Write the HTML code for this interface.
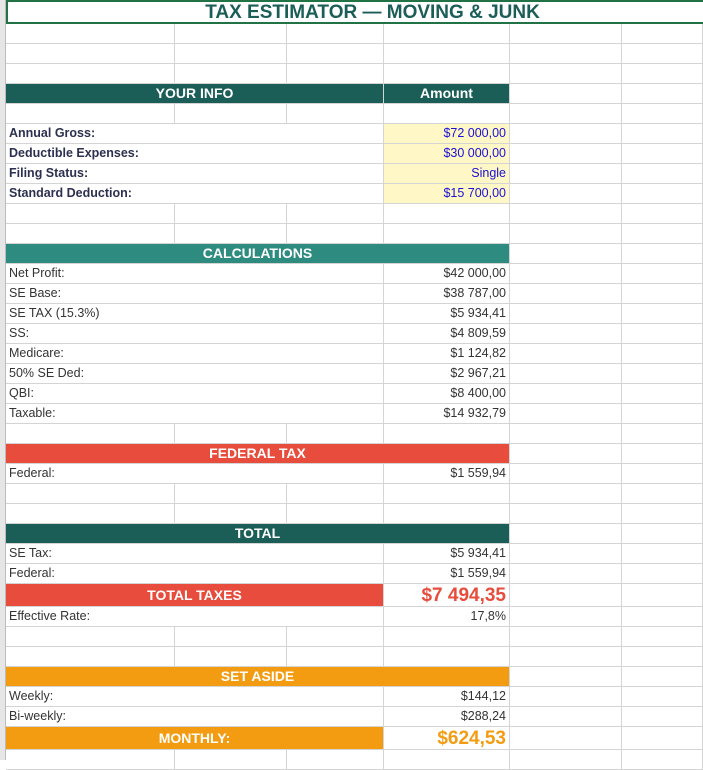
<!DOCTYPE html>
<html><head><style>
body{margin:0;width:703px;height:760px;overflow:hidden;background:#fff;font-family:"Liberation Sans",Arial,sans-serif;position:relative}
.c{position:absolute;box-sizing:border-box;border-right:1px solid #d4d4d4;border-bottom:1px solid #d4d4d4;font-size:12.5px;line-height:19px;color:#333;white-space:nowrap;overflow:hidden}
.l{padding-left:3px}
.r{text-align:right;padding-right:3px}
.b{font-weight:bold;color:#2c3050}
.h{color:#fff;font-weight:bold;text-align:center;font-size:14px}
.y{background:#fff8c6;color:#1a10d8}
#strip{position:absolute;left:0;top:0;width:6px;height:760px;background:#e6e6e6;border-right:1px solid #bbb;box-sizing:border-box;z-index:2}
</style></head><body>
<div id="strip"></div>
<div style="position:absolute;left:6px;top:0;width:697px;height:24px;border:2px solid #217346;border-right:none;box-sizing:border-box;text-align:center;font-weight:bold;font-size:19px;line-height:21px;color:#1b5e57;padding-left:34px">TAX ESTIMATOR — MOVING &amp; JUNK</div>
<div id="g"></div>
<script>
var X=[6,175,287,384,510,622,703];
var html='';
function cell(x1,x2,y,h,cls,txt,st){html+='<div class="c '+(cls||'')+'" style="left:'+x1+'px;top:'+y+'px;width:'+(x2-x1)+'px;height:'+h+'px;'+(st||'')+'">'+(txt||'')+'</div>';}
function blank(y,h){h=h||20;for(var i=0;i<6;i++)cell(X[i],X[i+1],y,h);}
function lab(y,l,v,bold,yel,h,vst){h=h||20;cell(6,384,y,h,'l'+(bold?' b':''),l);cell(384,510,y,h,'r'+(yel?' y':''),v,vst||'');cell(510,622,y,h);cell(622,703,y,h);}
function hdr(y,t,bg,t2,bg2,h){h=h||20;if(t2!==undefined){cell(6,384,y,h,'h',t,'background:'+bg);cell(384,510,y,h,'h',t2,'background:'+bg2);}else cell(6,510,y,h,'h',t,'background:'+bg);cell(510,622,y,h);cell(622,703,y,h);}
blank(24);blank(44);blank(64);
hdr(84,'YOUR INFO','#1b5e57','Amount','#1b5e57');
blank(104);
lab(124,'Annual Gross:','$72 000,00',1,1);
lab(144,'Deductible Expenses:','$30 000,00',1,1);
lab(164,'Filing Status:','Single',1,1);
lab(184,'Standard Deduction:','$15 700,00',1,1);
blank(204);blank(224);
hdr(244,'CALCULATIONS','#2e8b80');
var calc=[['Net Profit:','$42 000,00'],['SE Base:','$38 787,00'],['SE TAX (15.3%)','$5 934,41'],['SS:','$4 809,59'],['Medicare:','$1 124,82'],['50% SE Ded:','$2 967,21'],['QBI:','$8 400,00'],['Taxable:','$14 932,79']];
for(var i=0;i<calc.length;i++)lab(264+20*i,calc[i][0],calc[i][1]);
blank(424);
hdr(444,'FEDERAL TAX','#e74c3c');
lab(464,'Federal:','$1 559,94');
blank(484);blank(504);
hdr(524,'TOTAL','#1b5e57');
lab(544,'SE Tax:','$5 934,41');
lab(564,'Federal:','$1 559,94');
cell(6,384,584,23,'h','TOTAL TAXES','background:#e74c3c;line-height:22px');
cell(384,510,584,23,'r','$7 494,35','color:#e74c3c;font-weight:bold;font-size:19px;line-height:23px');
cell(510,622,584,23);cell(622,703,584,23);
lab(607,'Effective Rate:','17,8%');
blank(627);blank(647);
hdr(667,'SET ASIDE','#f39c12');
lab(687,'Weekly:','$144,12');
lab(707,'Bi-weekly:','$288,24');
cell(6,384,727,23,'h','MONTHLY:','background:#f39c12;line-height:22px');
cell(384,510,727,23,'r','$624,53','color:#f39c12;font-weight:bold;font-size:19px;line-height:23px');
cell(510,622,727,23);cell(622,703,727,23);
blank(750);
document.getElementById('g').innerHTML=html;
</script>
</body></html>
